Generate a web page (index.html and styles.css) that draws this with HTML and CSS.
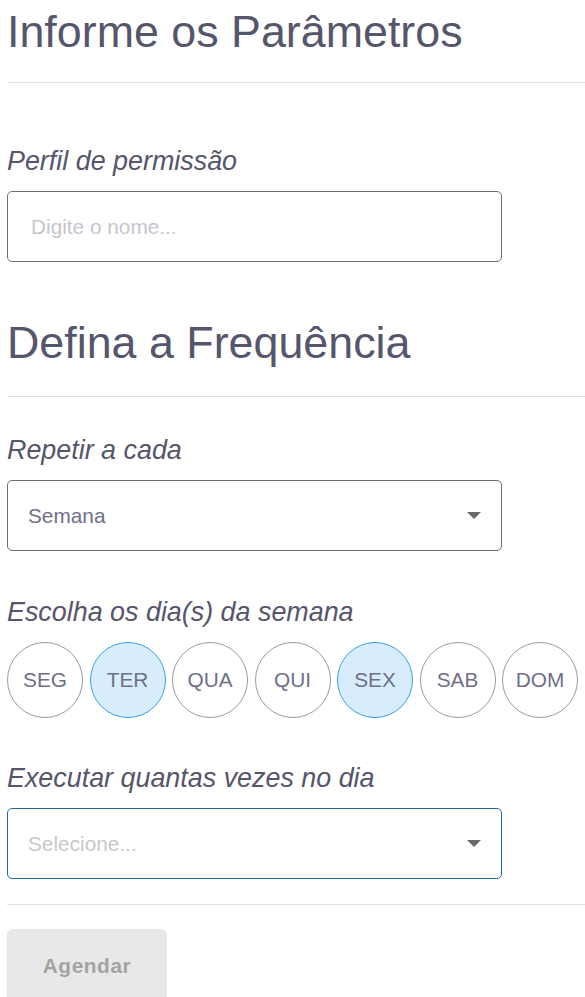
FILE: index.html
```html
<!DOCTYPE html>
<html lang="pt-BR">
<head>
    <meta charset="UTF-8">
    <meta name="viewport" content="width=device-width, initial-scale=1.0">
    <title>Agendamento</title>
    <link rel="stylesheet" href="styles.css">
</head>
<body>

<div class="page">
    <h1 class="title">Informe os Parâmetros</h1>
    <hr class="divider">

    <div class="group group-first">
        <label class="field-label" for="perfil">Perfil de permissão</label>
        <input class="field" id="perfil" type="text" placeholder="Digite o nome...">
    </div>

    <h1 class="title title-second">Defina a Frequência</h1>
    <hr class="divider divider-second">

    <div class="group group-section">
        <label class="field-label" for="repetir">Repetir a cada</label>
        <div class="select-wrap">
            <select class="field select" id="repetir">
                <option>Dia</option>
                <option selected>Semana</option>
                <option>Mês</option>
            </select>
            <span class="caret"></span>
        </div>
    </div>

    <div class="group group-days">
        <span class="field-label">Escolha os dia(s) da semana</span>
        <div class="days">
            <button class="day">SEG</button>
            <button class="day active">TER</button>
            <button class="day">QUA</button>
            <button class="day">QUI</button>
            <button class="day active">SEX</button>
            <button class="day">SAB</button>
            <button class="day">DOM</button>
        </div>
    </div>

    <div class="group">
        <label class="field-label" for="vezes">Executar quantas vezes no dia</label>
        <div class="select-wrap">
            <select class="field select select-focus empty" id="vezes">
                <option selected>Selecione...</option>
                <option>1</option>
                <option>2</option>
                <option>3</option>
            </select>
            <span class="caret"></span>
        </div>
    </div>

    <hr class="divider divider-bottom">

    <button class="submit" disabled>Agendar</button>
</div>

<script>
// Toggle the selected days
const days = document.querySelectorAll('.day');
days.forEach(day => {
    day.addEventListener('click', () => day.classList.toggle('active'));
});

const vezes = document.getElementById('vezes');
vezes.addEventListener('change', () => {
    vezes.classList.toggle('empty', vezes.selectedIndex === 0);
});
</script>

</body>
</html>
```

FILE: styles.css
```css
* {
    margin: 0;
    padding: 0;
    box-sizing: border-box;
}

body {
    font-family: 'Liberation Sans', Arial, sans-serif;
    color: #55566b;
    background: #fff;
    overflow: hidden;
}

.page {
    padding: 5px 7px 0 7px;
}

.title {
    font-size: 44.8px;
    font-weight: 400;
    line-height: 52px;
    color: #55566b;
}

.title-second {
    margin-top: 54px;
}

.divider {
    border: 0;
    border-top: 1px solid #e1e1e4;
    margin: 25px -7px 0 0;
}

.divider-second {
    margin-top: 28px;
}

.group {
    margin-top: 45px;
}

.group-first {
    margin-top: 63px;
}

.group-section {
    margin-top: 38px;
}

.group-days {
    margin-top: 46px;
}

.field-label {
    display: block;
    font-size: 26.88px;
    font-style: italic;
    line-height: 31px;
    margin-bottom: 14px;
    color: #55566b;
}

.field {
    display: block;
    width: 495px;
    height: 71px;
    border: 1px solid #6e6e74;
    border-radius: 5px;
    padding: 0 20px 0 23px;
    font-family: inherit;
    font-size: 20.8px;
    color: #6f6f88;
    background: #fff;
    outline: none;
}

.field::placeholder {
    color: #c6c6ce;
}

.select-wrap {
    position: relative;
    width: 495px;
}

.select {
    appearance: none;
    -webkit-appearance: none;
    padding-left: 20px;
    cursor: pointer;
}

.select-focus {
    border-color: #1e6aa0;
}

.select.empty {
    color: #c8c8c8;
}

.caret {
    position: absolute;
    right: 21px;
    top: 32px;
    width: 0;
    height: 0;
    border-left: 7px solid transparent;
    border-right: 7px solid transparent;
    border-top: 7px solid #6a6a6a;
    pointer-events: none;
}

.days {
    display: flex;
    justify-content: space-between;
    width: 571px;
}

.day {
    width: 76px;
    height: 76px;
    border-radius: 50%;
    border: 1px solid #9b9b9b;
    background: #fff;
    font-family: inherit;
    font-size: 20.8px;
    color: #6f6f88;
    cursor: pointer;
}

.day.active {
    border-color: #3a9fe0;
    background: #d7edfb;
}

.divider-bottom {
    margin-top: 25px;
}

.submit {
    margin-top: 24px;
    width: 160px;
    padding: 24px 0;
    line-height: 26px;
    border: none;
    border-radius: 6px;
    background: #e8e8e8;
    font-family: inherit;
    font-size: 20.8px;
    font-weight: 700;
    letter-spacing: 0.6px;
    color: #a3a3a3;
}
```
